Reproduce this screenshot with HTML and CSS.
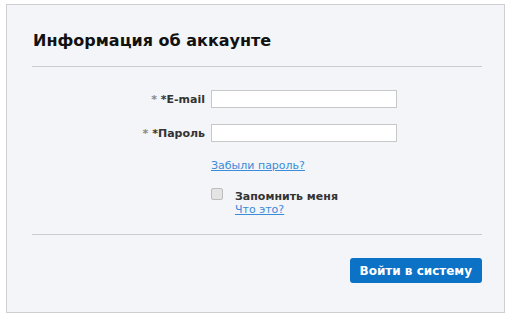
FILE: index.html
```
<!DOCTYPE html>
<html>
  <head>
    <title>Вход</title>
    <link rel="stylesheet" href="styles.css">
  </head>
  <body>

    <div class="panel">
      <h2 class="panel-title">Информация об аккаунте</h2>

      <form class="login-form">
        <label class="field-label" for="email"><span class="req">* </span>*E-mail</label>
        <input class="field-input" id="email" type="text">

        <label class="field-label" for="password"><span class="req">* </span>*Пароль</label>
        <input class="field-input" id="password" type="password">

        <div class="field-extra forgot">
          <a href="#">Забыли пароль?</a>
        </div>

        <div class="field-extra remember">
          <input type="checkbox" id="remember" class="remember-box">
          <div class="remember-text">
            <label for="remember">Запомнить меня</label>
            <a href="#">Что это?</a>
          </div>
        </div>
      </form>

      <div class="panel-actions">
        <button type="submit" class="btn-login">Войти в систему</button>
      </div>
    </div>

  </body>
</html>
```

FILE: styles.css
```
html, body {
  margin: 0;
  background-color: #fff;
}

body {
  font-family: "DejaVu Sans", Verdana, sans-serif;
  font-size: 11px;
  color: #333;
}

.panel {
  box-sizing: border-box;
  margin: 4px 0 0 6px;
  width: 499px;
  height: 309px;
  padding: 0 22px 0 25px;
  background-color: #f3f5f8;
  border: 1px solid #cfcfcf;
}

.panel-title {
  margin: 0;
  padding: 26px 0 0 1px;
  height: 35px;
  font-size: 16px;
  font-weight: bold;
  color: #111;
  border-bottom: 1px solid #ccc;
}

/* Form */

.login-form {
  display: grid;
  grid-template-columns: 173px 186px;
  column-gap: 6px;
  row-gap: 16px;
  align-items: center;
  padding-top: 23px;
  height: 144px;
  align-content: start;
  border-bottom: 1px solid #ccc;
}

.field-label {
  text-align: right;
  font-weight: bold;
  color: #333;
}

.req {
  color: #888;
}

.field-input {
  box-sizing: border-box;
  width: 186px;
  height: 18px;
  margin: 0;
  border: 1px solid #c8c8c8;
  background-color: #fff;
}

.field-extra {
  grid-column: 2;
}

.forgot {
  margin-top: 1px;
}

a {
  color: #3b8bd9;
}

.remember {
  display: flex;
  align-items: flex-start;
}

.remember-box {
  appearance: none;
  box-sizing: border-box;
  margin: 0 12px 0 0;
  width: 12px;
  height: 12px;
  border: 1px solid #bdbdbd;
  border-radius: 2px;
  background-color: #e4e4e4;
}

.remember-text {
  display: flex;
  flex-direction: column;
  padding-top: 2px;
}

.remember-text label {
  font-weight: bold;
  color: #333;
}

/* Actions */

.panel-actions {
  display: flex;
  justify-content: flex-end;
  padding-top: 23px;
}

.btn-login {
  height: 25px;
  padding: 0 10px;
  border: none;
  border-radius: 3px;
  background-color: #0b72c6;
  color: #fff;
  font-family: "DejaVu Sans", Verdana, sans-serif;
  font-size: 12px;
  font-weight: bold;
}
```
